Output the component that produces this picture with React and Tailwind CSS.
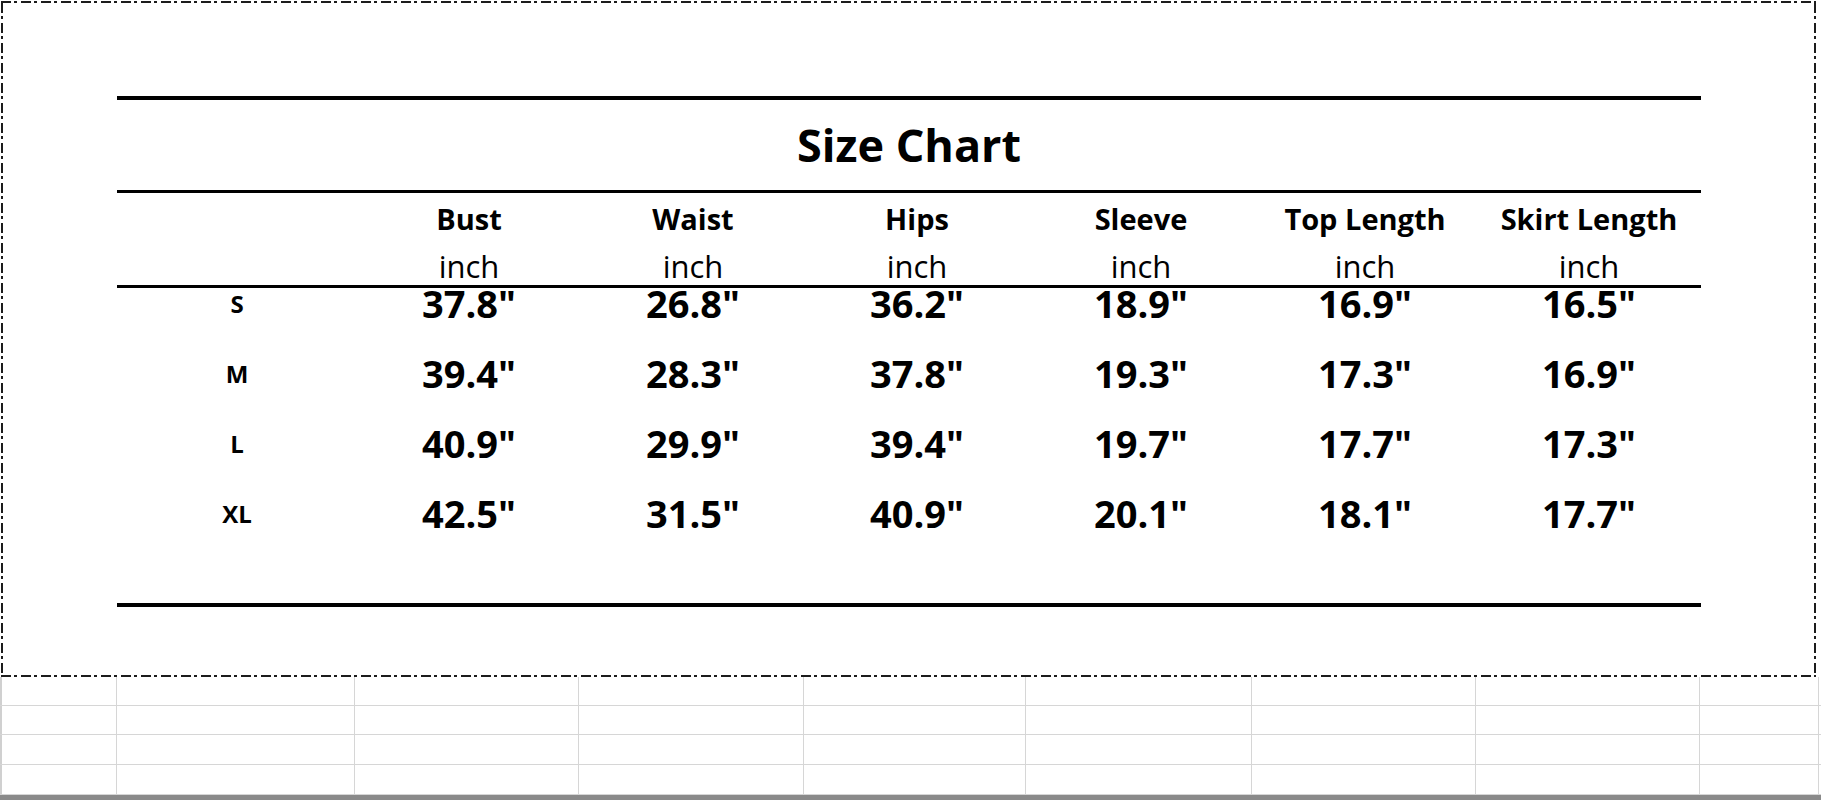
const columns = ["Bust", "Waist", "Hips", "Sleeve", "Top Length", "Skirt Length"];

const rows = [
  { size: "S", values: ['37.8"', '26.8"', '36.2"', '18.9"', '16.9"', '16.5"'] },
  { size: "M", values: ['39.4"', '28.3"', '37.8"', '19.3"', '17.3"', '16.9"'] },
  { size: "L", values: ['40.9"', '29.9"', '39.4"', '19.7"', '17.7"', '17.3"'] },
  { size: "XL", values: ['42.5"', '31.5"', '40.9"', '20.1"', '18.1"', '17.7"'] },
];

// sheet cell widths under the picture
const gridCols = [115, 238, 224, 225, 222, 226, 224, 224, 119];

function SheetRow({ h }) {
  return (
    <div className="flex border-b border-[#d6d6d6]" style={{ height: h }}>
      <div className="w-[2px] bg-[#d0d0d0]" />
      {gridCols.map((w, i) => (
        <div key={i} className="border-r border-[#d6d6d6] shrink-0" style={{ width: w }} />
      ))}
    </div>
  );
}

function App() {
  return (
    <div className="w-[1821px] h-[800px] bg-white overflow-hidden text-black font-['Open_Sans',sans-serif]">
      {/* picture frame */}
      <div className="ml-[1px] pt-[1px] w-[1815px]">
        <div className="h-[2px] bg-[repeating-linear-gradient(90deg,#1c1c1c_0_10px,transparent_10px_13px,#1c1c1c_13px_16px,transparent_16px_20px)]" />
        <div className="flex h-[672px]">
          <div className="w-[2px] bg-[repeating-linear-gradient(180deg,#1c1c1c_0_10px,transparent_10px_13px,#1c1c1c_13px_16px,transparent_16px_20px)]" />
          <div className="flex-1 pl-[114px] pt-[93px]">
            <div className="w-[1584px]">
              <div className="h-[4px] bg-black" />
              <div className="h-[90px] pt-[22px] text-center">
                <div className="text-[45px] leading-[45px] font-bold">Size Chart</div>
              </div>
              <div className="h-[3px] bg-black" />
              <div className="flex h-[92px]">
                <div className="w-[240px]" />
                {columns.map((c) => (
                  <div key={c} className="w-[224px] flex flex-col items-center pt-[12px]">
                    <div className="text-[29px] leading-[28px] font-bold">{c}</div>
                    <div className="mt-[18px] text-[31px] leading-[31px]">inch</div>
                  </div>
                ))}
              </div>
              <div className="h-[3px] bg-black" />
              {rows.map((r) => (
                <div key={r.size} className="flex h-[70px] items-start">
                  <div className="w-[240px] text-center text-[24px] leading-[32px] font-bold">{r.size}</div>
                  {r.values.map((v, i) => (
                    <div key={i} className="w-[224px] text-center text-[38px] leading-[30px] font-bold">
                      {v}
                    </div>
                  ))}
                </div>
              ))}
              <div className="h-[35px]" />
              <div className="h-[4px] bg-black" />
            </div>
          </div>
          <div className="w-[2px] bg-[repeating-linear-gradient(180deg,#1c1c1c_0_10px,transparent_10px_13px,#1c1c1c_13px_16px,transparent_16px_20px)]" />
        </div>
        <div className="h-[2px] bg-[repeating-linear-gradient(90deg,#1c1c1c_0_10px,transparent_10px_13px,#1c1c1c_13px_16px,transparent_16px_20px)]" />
      </div>
      {/* spreadsheet below */}
      <SheetRow h={29} />
      <SheetRow h={29} />
      <SheetRow h={30} />
      <SheetRow h={30} />
      <div className="h-[6px] bg-[#8a8a8a]" />
    </div>
  );
}

export default App;
